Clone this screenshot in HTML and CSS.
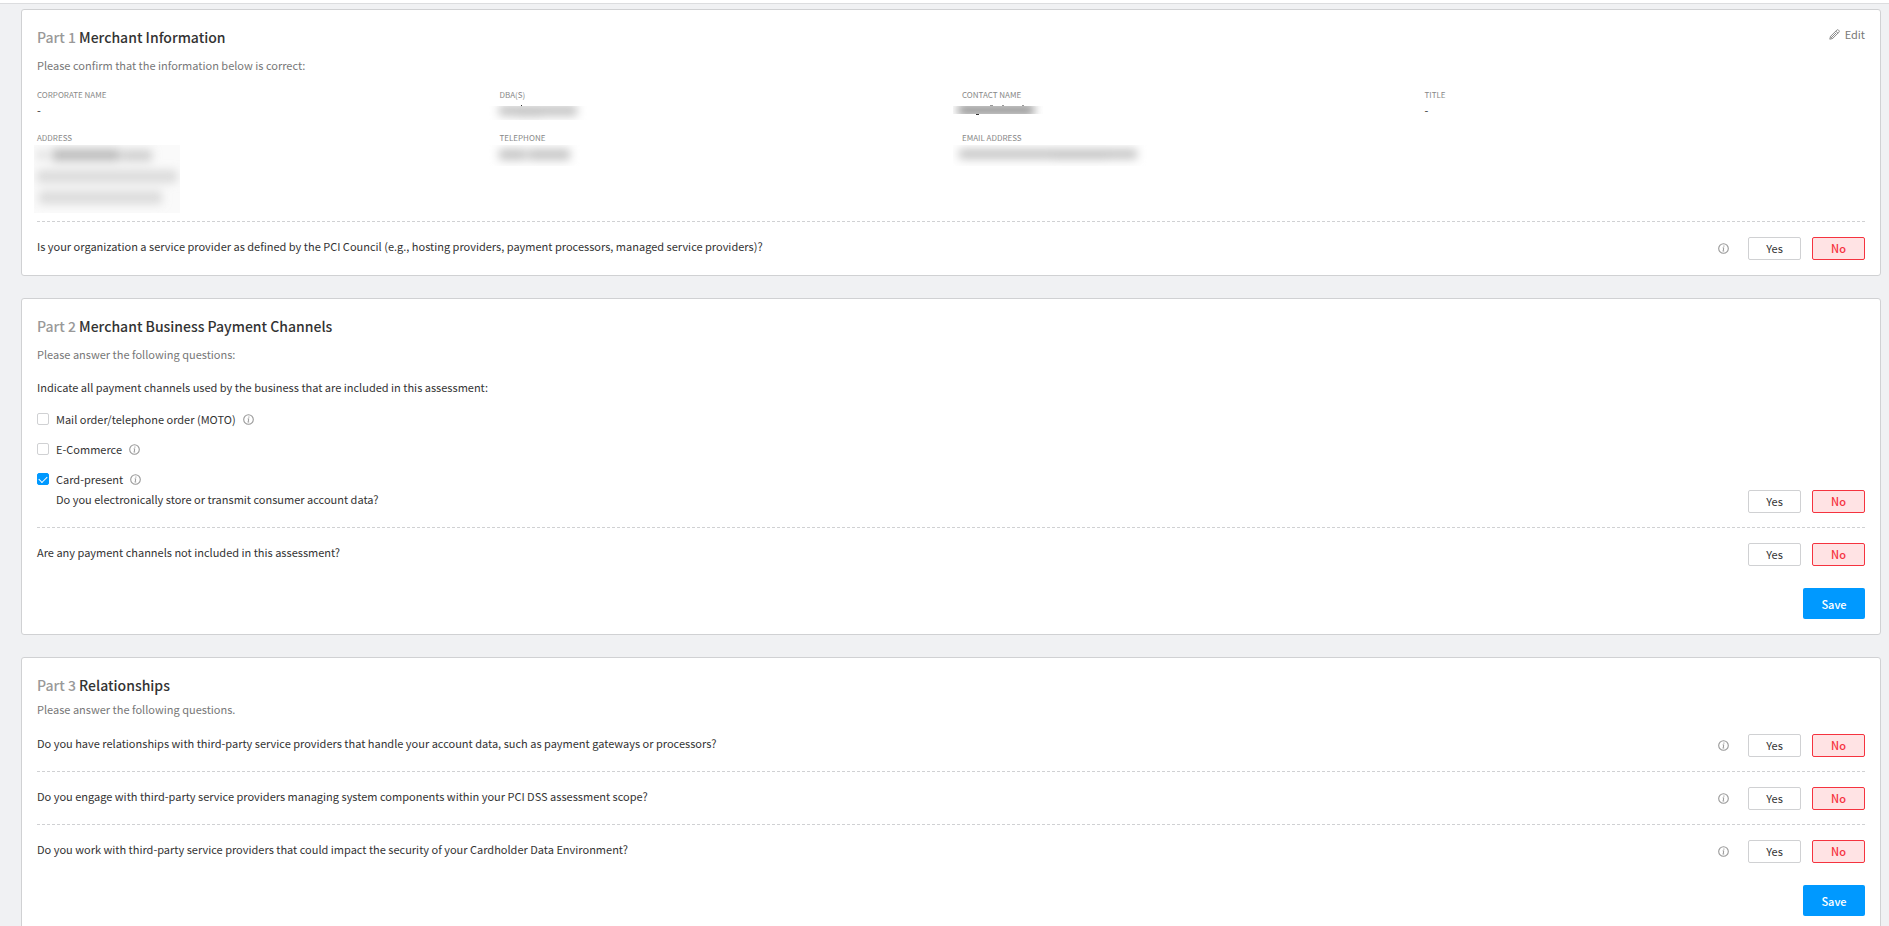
FILE: index.html
```html
<!DOCTYPE html>
<html lang="en">
<head>
    <meta charset="UTF-8">
    <title>Merchant Assessment</title>
    <link rel="stylesheet" href="styles.css">
</head>
<body>
    <!-- Shared icons and filters -->
    <svg class="defs" width="0" height="0" aria-hidden="true">
        <filter id="blur" x="-30%" y="-150%" width="160%" height="400%">
            <feGaussianBlur stdDeviation="5"/>
        </filter>
        <symbol id="info" viewBox="0 0 11 11">
            <circle cx="5.5" cy="5.5" r="4.8" fill="none" stroke="#999" stroke-width="1.1"/>
            <path d="M5.9 2.5v1.2M4.7 4.8h1l-.4 3M4.6 8h1.6" fill="none" stroke="#999" stroke-width="1"/>
        </symbol>
    </svg>

    <div class="topbar"></div>

    <main class="page">
        <!-- Part 1 -->
        <section class="card">
            <div class="card-head">
                <h2><span>Part 1</span> Merchant Information</h2>
                <button class="edit" type="button">
                    <svg width="11" height="11" viewBox="0 0 11 11" fill="none" stroke="#888" stroke-width="1">
                        <path d="M.8 10.2l.7-2.8L7.8 1.1a1.2 1.2 0 0 1 1.7 0l.4.4a1.2 1.2 0 0 1 0 1.7L3.6 9.5z"/>
                        <path d="M6.8 2.1l2.1 2.1M2.6 8.4l4.6-4.6M1.5 7.4l2.1 2.1"/>
                    </svg>
                    Edit
                </button>
            </div>
            <p class="subtitle">Please confirm that the information below is correct:</p>

            <dl class="info-grid">
                <div>
                    <dt>Corporate Name</dt>
                    <dd>-</dd>
                </div>
                <div>
                    <dt>DBA(s)</dt>
                    <dd>
                        <svg class="redacted wide" width="107" height="18">
                            <g filter="url(#blur)" fill="#c4c4c4">
                                <rect x="13" y="3" width="78" height="11"/>
                                <rect x="30" y="5" width="26" height="11" opacity=".4"/>
                            </g>
                            <rect width="107" height="4" fill="#fff"/>
                            <rect x="35" y="3" width="1" height="1" fill="#333"/>
                        </svg>
                    </dd>
                </div>
                <div>
                    <dt>Contact Name</dt>
                    <dd>
                        <svg class="redacted" width="90" height="18">
                            <g filter="url(#blur)" fill="#999">
                                <rect x="5" y="2" width="76" height="12"/>
                            </g>
                            <rect width="90" height="4" fill="#fff"/>
                            <rect y="12" width="90" height="6" fill="#fff"/>
                            <path d="M37 3.5h3M49 3.5h2M69 3.5h2" stroke="#999"/>
                            <path d="M23 12.5h3" stroke="#333"/>
                        </svg>
                    </dd>
                </div>
                <div>
                    <dt>Title</dt>
                    <dd>-</dd>
                </div>
                <div>
                    <dt>Address</dt>
                    <dd>
                        <svg class="redacted address" width="146" height="68">
                            <rect width="146" height="68" fill="#fafafa"/>
                            <g filter="url(#blur)" fill="#bbb">
                                <rect x="3" y="6" width="10" height="8" opacity=".5"/>
                                <rect x="18" y="4" width="68" height="12"/>
                                <rect x="88" y="5" width="30" height="11" opacity=".7"/>
                                <rect x="3" y="25" width="140" height="13" opacity=".5"/>
                                <rect x="5" y="46" width="123" height="13" opacity=".5"/>
                            </g>
                        </svg>
                    </dd>
                </div>
                <div>
                    <dt>Telephone</dt>
                    <dd>
                        <svg class="redacted wide" width="96" height="21">
                            <g filter="url(#blur)" fill="#c4c4c4">
                                <rect x="13" y="4" width="27" height="11"/>
                                <rect x="42" y="4" width="42" height="11"/>
                            </g>
                        </svg>
                    </dd>
                </div>
                <div>
                    <dt>Email Address</dt>
                    <dd>
                        <svg class="redacted" width="194" height="21">
                            <g filter="url(#blur)" fill="#c4c4c4">
                                <rect x="6" y="4" width="178" height="10"/>
                                <rect x="98" y="4" width="58" height="11" opacity=".4"/>
                            </g>
                        </svg>
                    </dd>
                </div>
            </dl>

            <div class="question divided">
                <p>Is your organization a service provider as defined by the PCI Council (e.g., hosting providers, payment processors, managed service providers)?</p>
                <div class="answers">
                    <svg class="info"><use href="#info"/></svg>
                    <button class="option" type="button" aria-pressed="false">Yes</button>
                    <button class="option no" type="button" aria-pressed="true">No</button>
                </div>
            </div>
        </section>

        <!-- Part 2 -->
        <section class="card">
            <div class="card-head">
                <h2><span>Part 2</span> Merchant Business Payment Channels</h2>
            </div>
            <p class="subtitle">Please answer the following questions:</p>
            <p class="lead">Indicate all payment channels used by the business that are included in this assessment:</p>

            <div class="channels">
                <div class="channel">
                    <input type="checkbox" id="moto">
                    <label for="moto">Mail order/telephone order (MOTO)</label>
                    <svg class="info"><use href="#info"/></svg>
                </div>
                <div class="channel">
                    <input type="checkbox" id="ecommerce">
                    <label for="ecommerce">E-Commerce</label>
                    <svg class="info"><use href="#info"/></svg>
                </div>
                <div class="channel">
                    <input type="checkbox" id="card-present" checked>
                    <label for="card-present">Card-present</label>
                    <svg class="info"><use href="#info"/></svg>
                </div>
            </div>

            <div class="question nested">
                <p>Do you electronically store or transmit consumer account data?</p>
                <div class="answers">
                    <button class="option" type="button" aria-pressed="false">Yes</button>
                    <button class="option no" type="button" aria-pressed="true">No</button>
                </div>
            </div>
            <div class="question divided">
                <p>Are any payment channels not included in this assessment?</p>
                <div class="answers">
                    <button class="option" type="button" aria-pressed="false">Yes</button>
                    <button class="option no" type="button" aria-pressed="true">No</button>
                </div>
            </div>
            <div class="actions">
                <button class="save" type="button">Save</button>
            </div>
        </section>

        <!-- Part 3 -->
        <section class="card compact">
            <div class="card-head">
                <h2><span>Part 3</span> Relationships</h2>
            </div>
            <p class="subtitle">Please answer the following questions.</p>

            <div class="question">
                <p>Do you have relationships with third-party service providers that handle your account data, such as payment gateways or processors?</p>
                <div class="answers">
                    <svg class="info"><use href="#info"/></svg>
                    <button class="option" type="button" aria-pressed="false">Yes</button>
                    <button class="option no" type="button" aria-pressed="true">No</button>
                </div>
            </div>
            <div class="question divided">
                <p>Do you engage with third-party service providers managing system components within your PCI DSS assessment scope?</p>
                <div class="answers">
                    <svg class="info"><use href="#info"/></svg>
                    <button class="option" type="button" aria-pressed="false">Yes</button>
                    <button class="option no" type="button" aria-pressed="true">No</button>
                </div>
            </div>
            <div class="question divided">
                <p>Do you work with third-party service providers that could impact the security of your Cardholder Data Environment?</p>
                <div class="answers">
                    <svg class="info"><use href="#info"/></svg>
                    <button class="option" type="button" aria-pressed="false">Yes</button>
                    <button class="option no" type="button" aria-pressed="true">No</button>
                </div>
            </div>
            <div class="actions">
                <button class="save" type="button">Save</button>
            </div>
        </section>
    </main>
</body>
</html>
```

FILE: styles.css
```css
* {
    box-sizing: border-box;
}
body {
    margin: 0;
    font-family: "Noto Sans CJK SC", "Noto Sans", sans-serif;
    font-size: 11px;
    line-height: 18px;
    color: #333;
    background-color: #f0f1f3;
}
h2, p, dl, dd {
    margin: 0;
}
button {
    font: inherit;
    cursor: pointer;
}
.defs {
    position: absolute;
}
.topbar {
    height: 4px;
    background: #fff;
    border-bottom: 1px solid #dcdddf;
}
.page {
    display: flex;
    flex-direction: column;
    gap: 22px;
    padding: 5px 8px 22px 21px;
}
.card {
    padding: 15px;
    background: #fff;
    border: 1px solid #d0d1d3;
    border-radius: 3px;
}
.card-head {
    display: flex;
    justify-content: space-between;
    height: 24px;
}
h2 {
    font-size: 14px;
    font-weight: 500;
    line-height: 24px;
}
h2 span {
    color: #999;
}
.edit {
    display: flex;
    align-items: center;
    gap: 5px;
    height: 18px;
    padding: 0;
    border: 0;
    background: none;
    color: #777;
}
.subtitle {
    margin-top: 7px;
    color: #777;
}
.compact .subtitle {
    margin-top: 3px;
}
.lead {
    margin-top: 15px;
}

/* Merchant details */
.info-grid {
    display: grid;
    grid-template-columns: repeat(4, 1fr);
    gap: 11px 22px;
    margin: 14px 0 8px;
}
dt {
    font-size: 8px;
    line-height: 14px;
    text-transform: uppercase;
    color: #888;
}
dd {
    height: 18px;
    line-height: 16px;
}
dd:has(.address) {
    height: 68px;
}
.redacted {
    display: block;
    margin-left: -9px;
}
.redacted.wide {
    margin-left: -14px;
}
.redacted.address {
    margin-left: -3px;
}

/* Questions */
.question {
    display: flex;
    justify-content: space-between;
    padding-bottom: 14px;
}
.question.divided {
    padding-top: 16px;
    /* 3px dashes with 2px gaps along the top edge */
    background: repeating-linear-gradient(to right, #d0d1d3 0 3px, transparent 3px 5px) top / 100% 1px no-repeat;
}
.question:last-child {
    padding-bottom: 0;
}
.subtitle + .question {
    margin-top: 16px;
}
.nested {
    margin-top: 2px;
    padding-left: 19px;
}
.answers {
    display: flex;
    align-items: center;
    gap: 11px;
}
.answers .info {
    margin-right: 8px;
}
.info {
    width: 11px;
    height: 11px;
}
.option {
    width: 53px;
    height: 23px;
    padding: 0;
    line-height: 21px;
    color: #333;
    background: #fff;
    border: 1px solid #d0d1d3;
    border-radius: 2px;
}
.option.no {
    font-weight: 500;
    color: #f5333f;
    background: #ffe3e4;
    border-color: #f5333f;
}

/* Payment channels */
.channels {
    display: flex;
    flex-direction: column;
    gap: 12px;
    margin-top: 14px;
}
.channel {
    display: flex;
    align-items: center;
    gap: 7px;
}
.channel input {
    display: grid;
    place-content: center;
    appearance: none;
    width: 12px;
    height: 12px;
    margin: 0;
    border: 1px solid #d0d1d3;
    border-radius: 2px;
}
.channel input:checked {
    background: #0099ff;
    border-color: #0099ff;
}
.channel input:checked::after {
    content: "";
    width: 7px;
    height: 4px;
    margin-bottom: 2px;
    border: solid #fff;
    border-width: 0 0 1px 1px;
    transform: rotate(-45deg);
}

.actions {
    display: flex;
    justify-content: flex-end;
    margin-top: 8px;
}
.save {
    width: 62px;
    height: 31px;
    padding: 0;
    font-weight: 500;
    color: #fff;
    background: #0099ff;
    border: 0;
    border-radius: 2px;
}
```
